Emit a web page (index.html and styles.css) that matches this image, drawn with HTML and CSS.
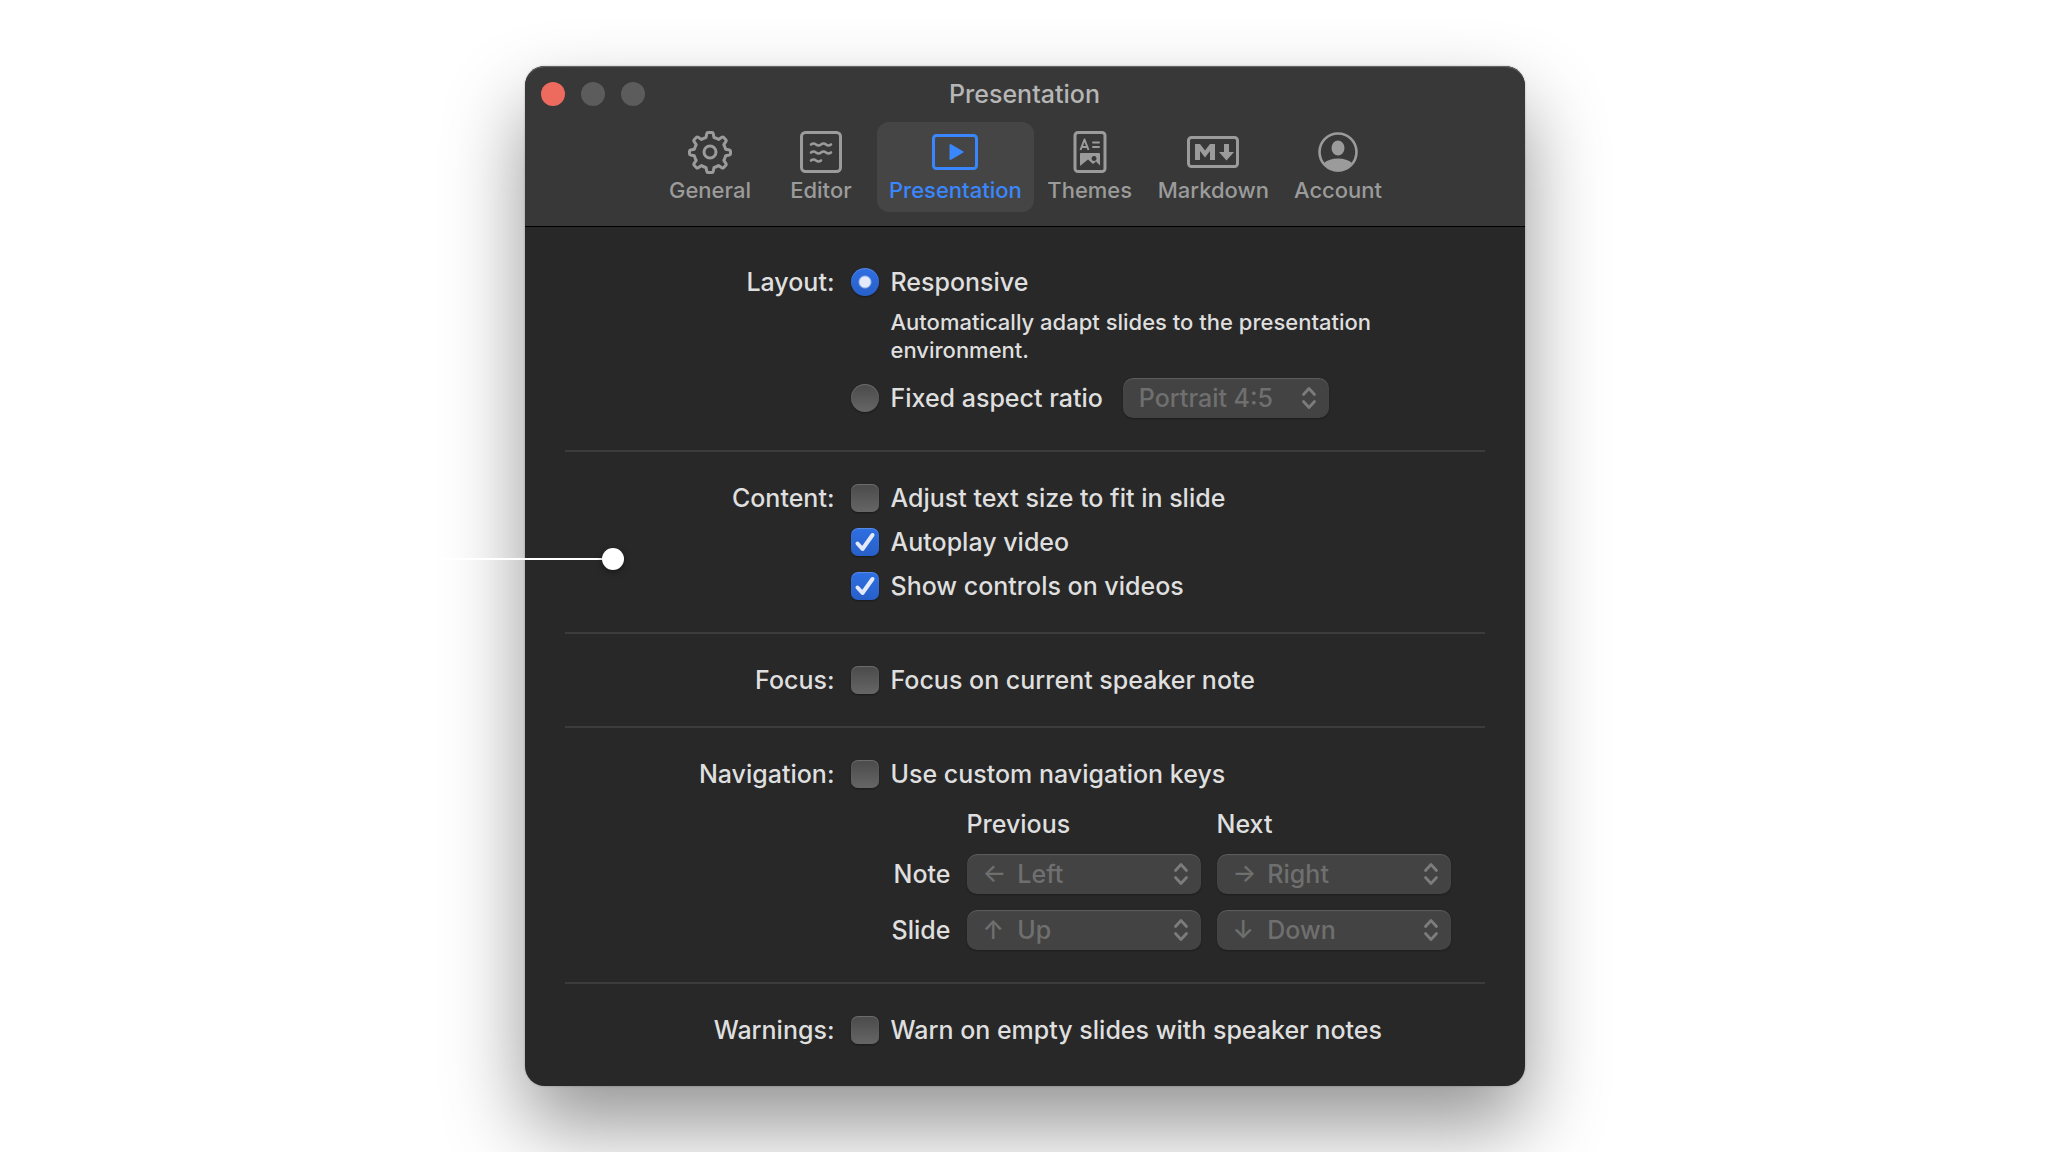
FILE: index.html
```
<!DOCTYPE html>
<html lang="en">
<head>
    <meta charset="UTF-8">
    <meta name="viewport" content="width=device-width, initial-scale=1.0">
    <title>Presentation</title>
    <link rel="stylesheet" href="styles.css">
</head>
<body>
    <main class="window">
        <header class="header">
            <div class="titlebar">
                <div class="lights">
                    <button type="button" class="light light-close" aria-label="Close"></button>
                    <button type="button" class="light" aria-label="Minimize" disabled></button>
                    <button type="button" class="light" aria-label="Zoom" disabled></button>
                </div>
                <h1 class="title">Presentation</h1>
            </div>
            <nav class="tabs">
                <button type="button" class="tab">
                    <svg class="tab-icon" width="44" height="44" viewBox="0 0 44 44" fill="none" stroke="currentColor" stroke-width="3" stroke-linejoin="round">
                        <path d="M20 2.500h4q1 0 1.200 1l.8 4q3 .8 4.500 1.900l3.300-2.200q1-.6 1.700.1l2.400 2.400q.7.800.1 1.700l-2.200 3.300q1.200 2 1.800 4.500l3.900.8q1 .2 1 1.200v2.600q0 1-1 1.200l-3.900.8q-.6 2.500-1.800 4.500l2.200 3.300q.6 1-.1 1.700l-2.400 2.400q-.7.700-1.700.1l-3.300-2.200q-2 1.200-4.500 1.900l-.8 4q-.2 1-1.200 1h-4q-1 0-1.200-1l-.8-4q-2.500-.7-4.500-1.900l-3.300 2.200q-1 .6-1.700-.1l-2.400-2.400q-.7-.7-.1-1.700l2.200-3.300q-1.200-2-1.800-4.500l-3.900-.8q-1-.2-1-1.200v-2.600q0-1 1-1.200l3.900-.8q.6-2.500 1.800-4.500l-2.200-3.300q-.6-.9.1-1.700l2.400-2.400q.7-.7 1.700-.1l3.300 2.200q2-1.200 4.500-1.900l.8-4q.2-1 1.200-1z"/>
                        <circle cx="22" cy="22" r="6"/>
                    </svg>
                    <span>General</span>
                </button>
                <button type="button" class="tab">
                    <svg class="tab-icon" width="44" height="44" viewBox="0 0 44 44" fill="none" stroke="currentColor" stroke-width="3" stroke-linecap="round">
                        <rect x="2.500" y="2.500" width="39" height="39" rx="4"/>
                        <path stroke-width="2.600" d="M12 14.500q2.500-2 5 0t5 0 5 0 5 0M12 22.500q2.500-2 5 0t5 0 5 0 5 0M12 30.500q2.500-2 5 0t5 0"/>
                    </svg>
                    <span>Editor</span>
                </button>
                <button type="button" class="tab tab-active">
                    <svg class="tab-icon" width="48" height="44" viewBox="0 0 48 44" fill="none" stroke="currentColor" stroke-width="3">
                        <rect x="2.500" y="5.500" width="43" height="33" rx="3"/>
                        <path d="M19.500 15v14l12-7z" fill="currentColor" stroke-width="2" stroke-linejoin="round"/>
                    </svg>
                    <span>Presentation</span>
                </button>
                <button type="button" class="tab">
                    <svg class="tab-icon" width="34" height="44" viewBox="0 0 34 44" fill="none" stroke="currentColor" stroke-width="3">
                        <rect x="2" y="2.500" width="30" height="39" rx="3"/>
                        <path stroke-width="2" stroke-linejoin="round" d="M7.500 20l4-10.500 4 10.500M9 17h5"/>
                        <path stroke-width="2" stroke-linecap="round" d="M20 12.500h6M20 17h6"/>
                        <path fill="currentColor" stroke="none" fill-rule="evenodd" d="M8 23h18q1 0 1 1v11.500l-4-4-3 2.500-5-4.500-8 6.500v-12q0-1 1-1zM21 26a2.500 2.500 0 1 0 .1 0z"/>
                    </svg>
                    <span>Themes</span>
                </button>
                <button type="button" class="tab">
                    <svg class="tab-icon" width="54" height="44" viewBox="0 0 54 44" fill="none" stroke="currentColor" stroke-width="3">
                        <rect x="2.500" y="7.500" width="49" height="29" rx="3"/>
                        <path fill="currentColor" stroke="none" d="M9 30V14h5l5 6.500 5-6.500h5v16h-5v-9l-5 6.500-5-6.500v9zM38 14h5v8h5l-7.500 8.500-7.500-8.500h5z"/>
                    </svg>
                    <span>Markdown</span>
                </button>
                <button type="button" class="tab">
                    <svg class="tab-icon" width="44" height="44" viewBox="0 0 44 44" fill="none" stroke="currentColor" stroke-width="2.600">
                        <circle cx="22" cy="22" r="18.500"/>
                        <ellipse cx="22" cy="18" rx="6.500" ry="7.500" fill="currentColor" stroke="none"/>
                        <path d="M8 33q5-4.500 14-4.500t14 4.500q-5 8.500-14 8.500t-14-8.500z" fill="currentColor" stroke="none"/>
                    </svg>
                    <span>Account</span>
                </button>
            </nav>
        </header>

        <form class="settings">
            <section class="group">
                <h2 class="group-label">Layout:</h2>
                <div class="group-body">
                    <div class="option">
                        <input type="radio" name="layout" id="responsive" class="radio" checked>
                        <label for="responsive">Responsive</label>
                    </div>
                    <p class="hint">Automatically adapt slides to the presentation environment.</p>
                    <div class="option">
                        <input type="radio" name="layout" id="fixed" class="radio">
                        <label for="fixed">Fixed aspect ratio</label>
                        <select class="select select-ratio" aria-label="Aspect ratio" disabled>
                            <option>Portrait 4:5</option>
                        </select>
                    </div>
                </div>
            </section>

            <section class="group">
                <h2 class="group-label">Content:</h2>
                <div class="group-body group-list">
                    <div class="option">
                        <input type="checkbox" id="adjust" class="check">
                        <label for="adjust">Adjust text size to fit in slide</label>
                    </div>
                    <div class="option">
                        <input type="checkbox" id="autoplay" class="check" checked>
                        <label for="autoplay">Autoplay video</label>
                    </div>
                    <div class="option">
                        <input type="checkbox" id="controls" class="check" checked>
                        <label for="controls">Show controls on videos</label>
                    </div>
                </div>
            </section>

            <section class="group">
                <h2 class="group-label">Focus:</h2>
                <div class="group-body">
                    <div class="option">
                        <input type="checkbox" id="focus" class="check">
                        <label for="focus">Focus on current speaker note</label>
                    </div>
                </div>
            </section>

            <section class="group">
                <h2 class="group-label">Navigation:</h2>
                <div class="group-body">
                    <div class="option">
                        <input type="checkbox" id="custom-keys" class="check">
                        <label for="custom-keys">Use custom navigation keys</label>
                    </div>
                    <div class="keys">
                        <span></span>
                        <span class="keys-head" id="previous">Previous</span>
                        <span class="keys-head" id="next">Next</span>
                        <span class="keys-name" id="note">Note</span>
                        <select class="select" aria-labelledby="note previous" disabled>
                            <option>←&nbsp;&thinsp;Left</option>
                        </select>
                        <select class="select" aria-labelledby="note next" disabled>
                            <option>→&nbsp;&thinsp;Right</option>
                        </select>
                        <span class="keys-name" id="slide">Slide</span>
                        <select class="select" aria-labelledby="slide previous" disabled>
                            <option>↑&nbsp; Up</option>
                        </select>
                        <select class="select" aria-labelledby="slide next" disabled>
                            <option>↓&nbsp; Down</option>
                        </select>
                    </div>
                </div>
            </section>

            <section class="group">
                <h2 class="group-label">Warnings:</h2>
                <div class="group-body">
                    <div class="option">
                        <input type="checkbox" id="warn" class="check">
                        <label for="warn">Warn on empty slides with speaker notes</label>
                    </div>
                </div>
            </section>
        </form>

        <div class="callout">
            <span class="callout-line"></span>
            <span class="callout-dot"></span>
        </div>
    </main>
</body>
</html>
```
FILE: styles.css
```
*{
    margin: 0;
    padding: 0;
    box-sizing: border-box;
}
body {
    min-height: 100vh;
    padding: 66px 20px;
    background-color: white;
    color: #dfdfdf;
    font-family: Inter, "Liberation Sans", sans-serif;
    font-size: 25px;
    font-weight: 500;
    line-height: 28px;
    overflow: hidden;
}
button, select, input {
    font: inherit;
    color: inherit;
    border: none;
}
.window {
    position: relative;
    max-width: 1000px;
    margin: auto;
    background-color: #282828;
    border-radius: 20px;
    box-shadow: 0 0 2px rgba(0, 0, 0, 0.3), 0 40px 80px rgba(0, 0, 0, 0.42);
}

/* title bar and tabs */
.header {
    padding-bottom: 14px;
    background-color: #383838;
    border-bottom: 1px solid black;
    border-radius: 20px 20px 0 0;
    box-shadow: inset 0 2px 1px -1px #6a6a6a;
}
.titlebar {
    display: grid;
    grid-template-columns: 1fr auto 1fr;
    align-items: center;
    height: 56px;
    padding: 0 16px;
}
.lights {
    display: flex;
    gap: 16px;
}
.light {
    width: 24px;
    height: 24px;
    border-radius: 50%;
    background-color: #5c5c5c;
}
.light-close {
    background-color: #ed6a5e;
}
.title {
    font-size: 25px;
    font-weight: 500;
    color: #b6b6b6;
}
.tabs {
    display: flex;
    justify-content: center;
    gap: 1px;
}
.tab {
    display: flex;
    flex-direction: column;
    align-items: center;
    min-width: 110px;
    height: 90px;
    padding: 8px 12px;
    gap: 2px;
    border-radius: 12px;
    background: none;
    color: #9b9b9b;
    font-size: 22px;
}
.tab-icon {
    flex: none;
}
.tab-active {
    background-color: #454545;
    color: #3a87fd;
}

/* settings */
.settings {
    padding: 9px 40px 10px;
}
.group {
    display: grid;
    grid-template-columns: 270px 1fr;
    column-gap: 16px;
    padding: 32px 0;
    border-bottom: 2px solid #3c3c3c;
}
.group:last-child {
    border-bottom: none;
}
.group-label {
    font-size: 25px;
    font-weight: 500;
    text-align: right;
}
.group-list {
    display: grid;
    row-gap: 16px;
}
.option {
    display: flex;
    align-items: center;
    column-gap: 12px;
}
.hint {
    max-width: 560px;
    padding: 12px 20px 14px 40px;
    font-size: 22px;
}
.radio, .check {
    flex: none;
    appearance: none;
    width: 28px;
    height: 28px;
    background: linear-gradient(#4a4a4a, #666);
    box-shadow: inset 0 1px 1px rgba(255, 255, 255, 0.2), 0 1px 2px rgba(0, 0, 0, 0.4);
}
.radio {
    border-radius: 50%;
}
.check {
    border-radius: 7px;
}
.radio:checked {
    background: radial-gradient(circle, #e3eafa 5px, transparent 7px), linear-gradient(#2f6fe2, #2860c8);
}
.check:checked {
    background: url("data:image/svg+xml,%3Csvg xmlns='http://www.w3.org/2000/svg' viewBox='0 0 28 28'%3E%3Cpath d='M6.500 15.500l5 5.500L21.500 7' fill='none' stroke='%23e3eafa' stroke-width='4' stroke-linecap='round' stroke-linejoin='round'/%3E%3C/svg%3E"), linear-gradient(#2f6fe2, #2860c8);
}
.select {
    appearance: none;
    width: 100%;
    height: 40px;
    padding: 0 16px;
    border-radius: 10px;
    background: #434343 url("data:image/svg+xml,%3Csvg xmlns='http://www.w3.org/2000/svg' width='16' height='24' viewBox='0 0 16 24'%3E%3Cpath d='M2.500 8.500L8 2.500l5.500 6M2.500 15.500l5.500 6 5.500-6' fill='none' stroke='%237c7c7c' stroke-width='2.800' stroke-linecap='round' stroke-linejoin='round'/%3E%3C/svg%3E") no-repeat right 12px center;
    box-shadow: inset 0 1px 1px rgba(255, 255, 255, 0.15), 0 1px 2px rgba(0, 0, 0, 0.3);
    color: #6f6f6f;
    opacity: 1;
}
.select-ratio {
    width: 206px;
    margin-left: 8px;
}

/* key bindings */
.keys {
    display: grid;
    grid-template-columns: 60px 234px 234px;
    gap: 16px;
    align-items: center;
    padding: 22px 0 0 40px;
}
.keys-name {
    text-align: right;
}

/* pointer line that comes in from the left */
.callout {
    position: absolute;
    top: 482px;
    left: -100px;
    display: flex;
    align-items: center;
    width: 199px;
}
.callout-line {
    flex: 1;
    height: 2px;
    background-color: white;
}
.callout-dot {
    width: 22px;
    height: 22px;
    border-radius: 50%;
    background-color: white;
    box-shadow: 0 2px 6px rgba(0, 0, 0, 0.4);
}
@media screen and (max-width:768px){
    .group {
        grid-template-columns: 1fr;
    }
    .group-label {
        text-align: left;
    }
    .tabs {
        flex-wrap: wrap;
    }
    .callout {
        display: none;
    }
}
```
